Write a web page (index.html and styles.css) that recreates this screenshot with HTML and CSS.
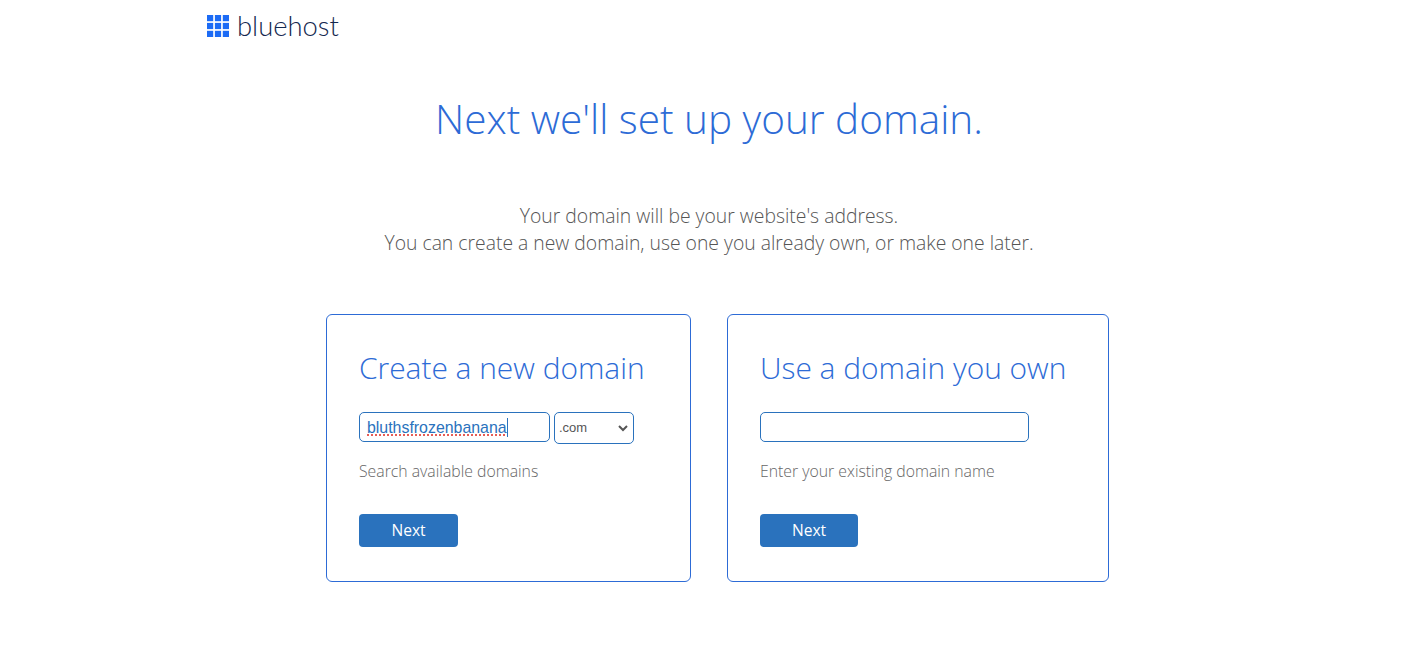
FILE: index.html
```html
<!DOCTYPE html>
<html lang="en">

<head>
    <meta charset="UTF-8">
    <meta name="viewport" content="width=device-width, initial-scale=1.0">
    <title>bluehost - set up your domain</title>
    <link rel="stylesheet" href="styles.css">
</head>

<body>
    <header class="top-bar">
        <a class="logo" href="#">
            <svg class="logo-mark" width="22" height="22" viewBox="0 0 22 22" aria-hidden="true">
                <rect x="0" y="0" width="6.2" height="6.2" />
                <rect x="7.9" y="0" width="6.2" height="6.2" />
                <rect x="15.8" y="0" width="6.2" height="6.2" />
                <rect x="0" y="7.9" width="6.2" height="6.2" />
                <rect x="7.9" y="7.9" width="6.2" height="6.2" />
                <rect x="15.8" y="7.9" width="6.2" height="6.2" />
                <rect x="0" y="15.8" width="6.2" height="6.2" />
                <rect x="7.9" y="15.8" width="6.2" height="6.2" />
                <rect x="15.8" y="15.8" width="6.2" height="6.2" />
            </svg>
            <span class="logo-text">bluehost</span>
        </a>
    </header>

    <main>
        <h1 class="title">Next we'll set up your domain.</h1>
        <p class="intro">Your domain will be your website's address.<br>You can create a new domain, use one you already own, or make one later.</p>

        <section class="cards">
            <form class="card card-new">
                <h2>Create a new domain</h2>
                <div class="field-row">
                    <div class="text-field text-field-new"><span class="typed">bluthsfrozenbanana</span><span class="caret"></span></div>
                    <select class="tld">
                        <option>.com</option>
                        <option>.net</option>
                        <option>.org</option>
                    </select>
                </div>
                <p class="hint">Search available domains</p>
                <button class="next next-new" type="button">Next</button>
            </form>

            <form class="card card-own">
                <h2>Use a domain you own</h2>
                <div class="field-row">
                    <input class="text-field text-field-own" type="text">
                </div>
                <p class="hint">Enter your existing domain name</p>
                <button class="next next-own" type="button">Next</button>
            </form>
        </section>
    </main>
</body>

</html>
```

FILE: styles.css
```css
* {
    box-sizing: border-box;
}

body {
    margin: 0;
    background: #fff;
    font-family: "Open Sans", "Liberation Sans", sans-serif;
    font-weight: 300;
}

.top-bar {
    height: 52px;
    padding: 15px 0 0 207px;
}

.logo {
    display: flex;
    align-items: flex-start;
    gap: 8px;
    text-decoration: none;
}

.logo-mark {
    fill: #1c6bf5;
}

.logo-text {
    margin-top: -6px;
    font-family: "Lato", sans-serif;
    font-size: 27.4px;
    line-height: 34px;
    font-weight: 300;
    color: #14284f;
}

.title {
    margin: 37px 7px 0 0;
    font-size: 40.5px;
    line-height: 60px;
    font-weight: 300;
    text-align: center;
    color: #2d6bd6;
}

.intro {
    margin: 53px 7px 0 0;
    font-size: 19.35px;
    line-height: 27px;
    text-align: center;
    color: #555;
}

.cards {
    display: flex;
    gap: 36px;
    margin: 58px 0 0 326px;
}

.card {
    height: 268px;
    padding: 33px 32px 0;
    border: 1px solid #2d6bd6;
    border-radius: 6px;
}

.card-new {
    width: 365px;
}

.card-own {
    width: 382px;
}

.card h2 {
    margin: 0;
    font-size: 29.9px;
    line-height: 40px;
    font-weight: 300;
    white-space: nowrap;
    color: #2d6bd6;
}

.field-row {
    display: flex;
    gap: 4px;
    min-height: 32px;
    margin-top: 24px;
}

.text-field {
    display: block;
    height: 30px;
    border: 1px solid #2a72bd;
    border-radius: 5px;
    background: #fff;
}

.text-field-new {
    width: 191px;
    padding-left: 7px;
    font-family: "Liberation Sans", sans-serif;
    font-size: 15.9px;
    font-weight: 400;
    line-height: 30px;
    white-space: nowrap;
    color: #2a72bd;
}

.text-field-own {
    width: 269px;
}

.typed {
    text-decoration: underline dotted #e0352b;
    text-underline-offset: 2px;
}

.caret {
    display: inline-block;
    width: 1px;
    height: 19px;
    vertical-align: -4px;
    background: #2a72bd;
}

.tld {
    width: 80px;
    height: 32px;
    padding: 0 0 2px 4px;
    border: 1px solid #2a72bd;
    border-radius: 5px;
    background: #fff url("data:image/svg+xml,%3Csvg xmlns='http://www.w3.org/2000/svg' width='10' height='7'%3E%3Cpath d='M1 1l4 4 4-4' fill='none' stroke='%23555' stroke-width='2'/%3E%3C/svg%3E") no-repeat right 5px center;
    appearance: none;
    font-family: "Liberation Sans", sans-serif;
    font-size: 13px;
    color: #555;
}

.hint {
    margin: 15px 0 0;
    font-size: 15.8px;
    line-height: 24px;
    color: #666;
}

.next {
    display: block;
    height: 33px;
    margin-top: 31px;
    padding: 0 0 2px;
    border: 0;
    border-radius: 4px;
    background: #2a72bd;
    font-family: inherit;
    font-size: 15.6px;
    font-weight: 400;
    color: #fff;
}

.next-new {
    width: 99px;
}

.next-own {
    width: 98px;
}
```
